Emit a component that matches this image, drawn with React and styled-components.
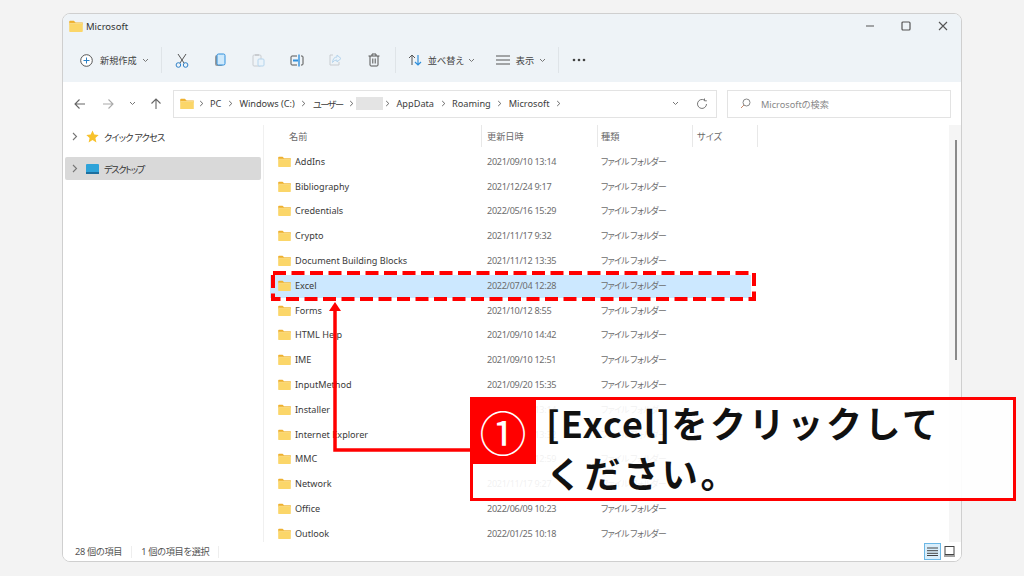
import styled, { createGlobalStyle } from "styled-components";

const UI_FONT = `"Noto Sans", "Noto Sans CJK JP", sans-serif`;
const TEXT_SIZE = "9.2px";

const GlobalStyle = createGlobalStyle`
    html, body {
        margin: 0;
        padding: 0;
        background: #f3f3f3;
    }
    * {
        box-sizing: border-box;
    }
`;

const Page = styled.div`
    position: relative;
    width: 1024px;
    height: 576px;
    padding: 13px 62px 14px 62px;
    overflow: hidden;
    font-family: ${UI_FONT};
    font-feature-settings: "palt";
    color: #3c3c3c;
`;

const Win = styled.div`
    height: 100%;
    display: flex;
    flex-direction: column;
    background: #fff;
    border: 1px solid #cfcfcf;
    border-radius: 8px;
    overflow: hidden;
`;

const Head = styled.div`
    height: 68px;
    flex: none;
    background: #eef3f7;
    display: flex;
    flex-direction: column;
`;

const TitleBar = styled.div`
    height: 24px;
    display: flex;
    align-items: center;
    padding-left: 6px;
    font-size: 9.5px;
    color: #333;
    gap: 3px;
`;

const WinControls = styled.div`
    margin-left: auto;
    display: flex;
`;

const WinBtn = styled.div`
    width: 36.5px;
    height: 24px;
    display: flex;
    align-items: center;
    justify-content: center;
`;

const Toolbar = styled.div`
    height: 44px;
    display: flex;
    align-items: center;
    padding-left: 17px;
`;

const ToolText = styled.span`
    font-size: ${TEXT_SIZE};
    color: #444;
    white-space: nowrap;
    margin: ${(p) => p.$margin || "0"};
`;

const ToolIcon = styled.div`
    width: ${(p) => p.$w || 38.4}px;
    height: 20px;
    display: flex;
    align-items: center;
    justify-content: center;
    flex: none;
    margin: ${(p) => p.$margin || "0"};
`;

const ToolSep = styled.div`
    width: 1px;
    height: 26px;
    background: #dfe4e8;
    flex: none;
    margin: ${(p) => p.$margin || "0"};
`;

const Chevron = styled.svg`
    width: 7px;
    height: 5px;
    flex: none;
    margin: ${(p) => p.$margin || "0"};
`;

const AddressRow = styled.div`
    height: 43px;
    flex: none;
    display: flex;
    align-items: center;
    padding: 0 10px 0 6px;
`;

const NavIcons = styled.div`
    width: 104px;
    flex: none;
    display: flex;
    align-items: center;
`;

const NavBtn = styled.div`
    width: ${(p) => p.$w}px;
    display: flex;
    justify-content: center;
`;

const AddressBox = styled.div`
    width: 544px;
    height: 28px;
    flex: none;
    background: #fff;
    border: 1px solid #e3e3e3;
    display: flex;
    align-items: center;
    padding: 0 8px 0 6px;
    font-size: ${TEXT_SIZE};
    color: #3c3c3c;
`;

const Crumb = styled.span`
    white-space: nowrap;
    letter-spacing: ${(p) => p.$spacing || 0}px;
`;

const CrumbSep = styled.span`
    width: 18px;
    flex: none;
    display: flex;
    justify-content: center;
    margin: ${(p) => p.$margin || "0"};
`;

const Blurred = styled.span`
    width: 27px;
    height: 13px;
    background: #e4e4e4;
    margin: 0 -4px 0 -5px;
    flex: none;
`;

const AddressTools = styled.div`
    margin-left: auto;
    display: flex;
    align-items: center;
    gap: 17px;
`;

const SearchBox = styled.div`
    width: 224px;
    height: 28px;
    margin-left: 10px;
    flex: none;
    background: #fff;
    border: 1px solid #e3e3e3;
    display: flex;
    align-items: center;
    gap: 10px;
    padding-left: 12px;
    font-size: ${TEXT_SIZE};
    color: #888;
`;

const Body = styled.div`
    flex: 1;
    min-height: 0;
    display: flex;
`;

const Sidebar = styled.div`
    width: 201px;
    flex: none;
    border-right: 1px solid #f0f0f0;
    padding: 0 2px;
`;

const NavItem = styled.div`
    height: 23px;
    margin-top: ${(p) => p.$top}px;
    display: flex;
    align-items: center;
    padding-left: 6px;
    gap: 8px;
    font-size: ${TEXT_SIZE};
    color: #333;
    border-radius: 2px;
    background: ${(p) => (p.$active ? "#d9d9d9" : "transparent")};
`;

const NavLabel = styled.span`
    margin-left: -3px;
    letter-spacing: ${(p) => p.$spacing}px;
`;

const Main = styled.div`
    flex: 1;
    min-width: 0;
    display: flex;
    flex-direction: column;
    padding-left: 6px;
`;

const ColHeader = styled.div`
    height: 22px;
    flex: none;
    display: grid;
    grid-template-columns: 212px 116px 95px 65px;
    font-size: ${TEXT_SIZE};
    color: #6a6a6a;
`;

const ColCell = styled.div`
    display: flex;
    align-items: center;
    padding-left: ${(p) => p.$pad || 5}px;
    border-right: 1px solid #e8e8e8;
`;

const List = styled.div`
    flex: 1;
    min-height: 0;
    overflow: hidden;
    padding-top: 2px;
`;

const Row = styled.div`
    height: 24.8px;
    display: grid;
    grid-template-columns: 212px 116px 95px;
    align-items: center;
    font-size: 9.1px;
    width: 481px;
    color: #3a3a3a;
    background: ${(p) => (p.$selected ? "#cce8ff" : "transparent")};
    box-shadow: ${(p) => (p.$selected ? "inset 0 2px 0 #fff" : "none")};
`;

const NameCell = styled.div`
    display: flex;
    align-items: center;
    gap: 4px;
    padding-left: 8px;
    white-space: nowrap;
`;

const DateCell = styled.div`
    padding-left: 5px;
    color: #6d6d6d;
    white-space: nowrap;
    letter-spacing: -0.3px;
`;

const TypeCell = styled.div`
    padding-left: 3px;
    color: #6d6d6d;
    font-size: 8.8px;
    white-space: nowrap;
    letter-spacing: -0.7px;
`;

const ScrollTrack = styled.div`
    width: 12px;
    flex: none;
    background: #f5f5f5;
    padding: 15px 0 0 6px;
`;

const ScrollThumb = styled.div`
    width: 2px;
    height: 220px;
    background: #8a8a8a;
`;

const StatusBar = styled.div`
    height: 19px;
    flex: none;
    display: flex;
    align-items: center;
    padding-left: 12px;
    font-size: ${TEXT_SIZE};
    letter-spacing: -0.3px;
    color: #555;
    background: #fff;
`;

const StatusItem = styled.span`
    padding-right: 9px;
    margin-right: 9px;
    border-right: 1px solid #eee;
    line-height: 12px;
`;

const ViewSwitch = styled.div`
    margin-left: auto;
    display: flex;
    align-items: center;
    padding-right: 3px;
`;

const ViewBtn = styled.div`
    width: 17px;
    height: 17px;
    display: flex;
    align-items: center;
    justify-content: center;
    border: 1px solid ${(p) => (p.$on ? "#6cb8e6" : "transparent")};
    background: ${(p) => (p.$on ? "#d9eefb" : "transparent")};
`;

/* annotations drawn on top of the screenshot */
const DashedBox = styled.svg`
    position: absolute;
    left: 271px;
    top: 271px;
    width: 485px;
    height: 30px;
`;

const Arrow = styled.svg`
    position: absolute;
    left: 320px;
    top: 296px;
    width: 160px;
    height: 160px;
`;

const Callout = styled.div`
    position: absolute;
    left: 470px;
    top: 397px;
    width: 546px;
    height: 104px;
    border: 3px solid #f00;
    background: rgba(255, 255, 255, 0.9);
    display: flex;
    font-family: "Noto Sans CJK JP", sans-serif;
    font-feature-settings: normal;
`;

const Badge = styled.div`
    width: 66px;
    height: 67px;
    margin: -3px 0 0 -3px;
    flex: none;
    background: #f00;
    color: #fff;
    display: flex;
    align-items: center;
    justify-content: center;
    font-size: 47px;
    line-height: 1;
`;

const CalloutText = styled.div`
    font-size: 36px;
    line-height: 50px;
    font-weight: 700;
    color: #111;
    width: 430px;
    margin-top: -3px;
    padding-left: 10px;
    letter-spacing: 2.6px;
`;

const CalloutLatin = styled.span`
    letter-spacing: 1.2px;
`;

const FolderIcon = ({ size = 13 }) => (
    <svg width={size} height={size * 0.85} viewBox="0 0 16 14" style={{ flex: "none" }}>
        <path d="M0 2 Q0 1 1 1 H5.5 L7.5 3 H16 V5 H0 Z" fill="#eeb02f" />
        <path d="M0 4 H15 Q16 4 16 5 V13 Q16 14 15 14 H1 Q0 14 0 13 Z" fill="#fbd669" />
        <path d="M0 4 H16" stroke="#fde9a6" strokeWidth="0.8" />
    </svg>
);

const ChevronDown = ({ margin, color = "#777" }) => (
    <Chevron viewBox="0 0 7 5" $margin={margin}>
        <path d="M1 1 L3.5 3.5 L6 1" fill="none" stroke={color} strokeWidth="1" />
    </Chevron>
);

const ChevronRight = ({ color = "#777" }) => (
    <svg width="7" height="9" viewBox="0 0 7 9">
        <path d="M2 1 L5.5 4.5 L2 8" fill="none" stroke={color} strokeWidth="1.1" />
    </svg>
);

const BreadcrumbSep = ({ margin }) => (
    <CrumbSep $margin={margin}>
        <svg width="5" height="7" viewBox="0 0 5 7">
            <path d="M1.2 1 L3.8 3.5 L1.2 6" fill="none" stroke="#666" strokeWidth="1" />
        </svg>
    </CrumbSep>
);

const ArrowIcon = ({ d, color = "#666" }) => (
    <svg width="12" height="12" viewBox="0 0 12 12">
        <path d={d} fill="none" stroke={color} strokeWidth="1.1" />
    </svg>
);

const rows = [
    ["AddIns", "2021/09/10 13:14"],
    ["Bibliography", "2021/12/24 9:17"],
    ["Credentials", "2022/05/16 15:29"],
    ["Crypto", "2021/11/17 9:32"],
    ["Document Building Blocks", "2021/11/12 13:35"],
    ["Excel", "2022/07/04 12:28", true],
    ["Forms", "2021/10/12 8:55"],
    ["HTML Help", "2021/09/10 14:42"],
    ["IME", "2021/09/10 12:51"],
    ["InputMethod", "2021/09/20 15:35"],
    ["Installer", "2021/09/10 13:14"],
    ["Internet Explorer", "2021/09/10 13:32"],
    ["MMC", "2021/09/10 12:59"],
    ["Network", "2021/11/17 9:27"],
    ["Office", "2022/06/09 10:23"],
    ["Outlook", "2022/01/25 10:18"],
];

function App() {
    return (
        <Page>
            <GlobalStyle />
            <Win>
                <Head>
                    <TitleBar>
                        <FolderIcon size={14} />
                        <span>Microsoft</span>
                        <WinControls>
                            <WinBtn>
                                <svg width="10" height="10" viewBox="0 0 10 10">
                                    <path d="M1 5 H9" stroke="#555" strokeWidth="1.2" />
                                </svg>
                            </WinBtn>
                            <WinBtn>
                                <svg width="10" height="10" viewBox="0 0 10 10">
                                    <rect x="1" y="1" width="8" height="8" rx="1" fill="none" stroke="#555" strokeWidth="1.2" />
                                </svg>
                            </WinBtn>
                            <WinBtn>
                                <svg width="10" height="10" viewBox="0 0 10 10">
                                    <path d="M1 1 L9 9 M9 1 L1 9" stroke="#555" strokeWidth="1.1" />
                                </svg>
                            </WinBtn>
                        </WinControls>
                    </TitleBar>
                    <Toolbar>
                        <svg width="13" height="13" viewBox="0 0 13 13">
                            <circle cx="6.5" cy="6.5" r="5.8" fill="#fff" stroke="#555" />
                            <path d="M6.5 3.5 V9.5 M3.5 6.5 H9.5" stroke="#2a7fc4" />
                        </svg>
                        <ToolText $margin="0 0 0 7px">新規作成</ToolText>
                        <ChevronDown margin="0 0 0 5px" />
                        <ToolSep $margin="0 1px 0 12px" />
                        <ToolIcon $w={38}>
                            <svg width="14" height="15" viewBox="0 0 14 15">
                                <path d="M3 1 L9 10 M11 1 L5 10" stroke="#555" fill="none" />
                                <circle cx="3.4" cy="12" r="2.3" fill="none" stroke="#2f80c8" />
                                <circle cx="10.6" cy="12" r="2.3" fill="none" stroke="#2f80c8" />
                            </svg>
                        </ToolIcon>
                        <ToolIcon>
                            <svg width="12" height="14" viewBox="0 0 12 14">
                                <rect x="1" y="2" width="8" height="11" rx="2" fill="#999" />
                                <rect x="3" y="1" width="8" height="11" rx="1.5" fill="#cfe9fb" stroke="#2f8fdc" />
                            </svg>
                        </ToolIcon>
                        <ToolIcon>
                            <svg width="13" height="14" viewBox="0 0 13 14">
                                <rect x="1" y="2" width="8" height="11" rx="1" fill="none" stroke="#c9ccd0" />
                                <rect x="3" y="1" width="4" height="2" fill="#c9ccd0" />
                                <rect x="6" y="6" width="6" height="7" rx="1" fill="#eaf3fa" stroke="#b5d4ec" />
                            </svg>
                        </ToolIcon>
                        <ToolIcon>
                            <svg width="14" height="13" viewBox="0 0 14 13">
                                <path d="M7 2 H2 Q1 2 1 3 V10 Q1 11 2 11 H7 M11 2 H12 Q13 2 13 3 V10 Q13 11 12 11 H11" fill="none" stroke="#555" />
                                <path d="M9 0.5 V12.5" stroke="#2f8fdc" strokeWidth="1.4" />
                                <path d="M3 6.5 H8" stroke="#2f8fdc" strokeWidth="2" />
                            </svg>
                        </ToolIcon>
                        <ToolIcon>
                            <svg width="13" height="12" viewBox="0 0 13 12">
                                <path d="M4 1 H1 V11 H10 V8" fill="none" stroke="#c9ccd0" />
                                <path d="M8 1 L12 4.5 L8 8 V6 Q5 6 3.5 8.5 Q4 3 8 3 Z" fill="#eaf3fa" stroke="#b5d4ec" />
                            </svg>
                        </ToolIcon>
                        <ToolIcon>
                            <svg width="12" height="14" viewBox="0 0 12 14">
                                <path d="M0.5 3 H11.5 M4 3 V1 H8 V3 M2 3 V12 Q2 13 3 13 H9 Q10 13 10 12 V3 M4.8 5.5 V10.5 M7.2 5.5 V10.5" fill="none" stroke="#555" />
                            </svg>
                        </ToolIcon>
                        <ToolSep $margin="0 6px 0 2px" />
                        <ToolIcon $w={26}>
                            <svg width="14" height="12" viewBox="0 0 14 12">
                                <path d="M4 11 V1 M1 4 L4 1 L7 4" fill="none" stroke="#555" />
                                <path d="M10 1 V11 M7 8 L10 11 L13 8" fill="none" stroke="#2f8fdc" strokeWidth="1.2" />
                            </svg>
                        </ToolIcon>
                        <ToolText>並べ替え</ToolText>
                        <ChevronDown margin="0 0 0 4px" />
                        <ToolIcon $w={26} $margin="0 0 0 15px">
                            <svg width="14" height="10" viewBox="0 0 14 10">
                                <path d="M0 1 H14 M0 5 H14 M0 9 H14" stroke="#555" />
                            </svg>
                        </ToolIcon>
                        <ToolText>表示</ToolText>
                        <ChevronDown margin="0 0 0 5px" />
                        <ToolSep $margin="0 0 0 12px" />
                        <ToolIcon $w={39}>
                            <svg width="14" height="4" viewBox="0 0 14 4">
                                <circle cx="2" cy="2" r="1.3" fill="#444" />
                                <circle cx="7" cy="2" r="1.3" fill="#444" />
                                <circle cx="12" cy="2" r="1.3" fill="#444" />
                            </svg>
                        </ToolIcon>
                    </Toolbar>
                </Head>
                <AddressRow>
                    <NavIcons>
                        <NavBtn $w={22}>
                            <ArrowIcon d="M11 6 H1 M5.5 1.5 L1 6 L5.5 10.5" />
                        </NavBtn>
                        <NavBtn $w={34}>
                            <ArrowIcon d="M1 6 H11 M6.5 1.5 L11 6 L6.5 10.5" color="#aaa" />
                        </NavBtn>
                        <NavBtn $w={14}>
                            <ChevronDown />
                        </NavBtn>
                        <NavBtn $w={34}>
                            <ArrowIcon d="M6 11 V1 M1.5 5.5 L6 1 L10.5 5.5" />
                        </NavBtn>
                    </NavIcons>
                    <AddressBox>
                        <FolderIcon size={14} />
                        <BreadcrumbSep margin="0 0 0 -2px" />
                        <Crumb>PC</Crumb>
                        <BreadcrumbSep />
                        <Crumb>Windows (C:)</Crumb>
                        <BreadcrumbSep />
                        <Crumb $spacing={-1.5}>ユーザー</Crumb>
                        <BreadcrumbSep />
                        <Blurred />
                        <BreadcrumbSep />
                        <Crumb>AppData</Crumb>
                        <BreadcrumbSep />
                        <Crumb>Roaming</Crumb>
                        <BreadcrumbSep />
                        <Crumb>Microsoft</Crumb>
                        <BreadcrumbSep />
                        <AddressTools>
                            <ChevronDown />
                            <svg width="12" height="12" viewBox="0 0 12 12">
                                <path d="M10.5 6 A4.5 4.5 0 1 1 8.5 2.2 M8.5 0.5 V2.8 H10.8" fill="none" stroke="#777" />
                            </svg>
                        </AddressTools>
                    </AddressBox>
                    <SearchBox>
                        <svg width="11" height="11" viewBox="0 0 11 11">
                            <circle cx="6.5" cy="4.5" r="3.5" fill="none" stroke="#888" />
                            <path d="M4 7 L1 10" stroke="#c98a6a" />
                        </svg>
                        <span>Microsoftの検索</span>
                    </SearchBox>
                </AddressRow>
                <Body>
                    <Sidebar>
                        <NavItem $top={0}>
                            <ChevronRight />
                            <svg width="13" height="13" viewBox="0 0 13 13">
                                <path d="M6.5 0.5 L8.3 4.6 L12.7 5 L9.4 8 L10.4 12.4 L6.5 10 L2.6 12.4 L3.6 8 L0.3 5 L4.7 4.6 Z" fill="#f8c22c" />
                            </svg>
                            <NavLabel $spacing={-0.8}>クイック アクセス</NavLabel>
                        </NavItem>
                        <NavItem $top={9} $active>
                            <ChevronRight />
                            <svg width="13" height="10" viewBox="0 0 13 10">
                                <rect width="13" height="9" rx="1" fill="#2ea3d9" />
                                <rect y="8" width="13" height="2" fill="#1d6f9f" />
                            </svg>
                            <NavLabel $spacing={-1.3}>デスクトップ</NavLabel>
                        </NavItem>
                    </Sidebar>
                    <Main>
                        <ColHeader>
                            <ColCell $pad={19}>名前</ColCell>
                            <ColCell>更新日時</ColCell>
                            <ColCell $pad={3}>種類</ColCell>
                            <ColCell $pad={4}>サイズ</ColCell>
                        </ColHeader>
                        <List>
                            {rows.map(([name, date, selected]) => (
                                <Row key={name} $selected={selected}>
                                    <NameCell>
                                        <FolderIcon size={13} />
                                        {name}
                                    </NameCell>
                                    <DateCell>{date}</DateCell>
                                    <TypeCell>ファイル フォルダー</TypeCell>
                                </Row>
                            ))}
                        </List>
                    </Main>
                    <ScrollTrack>
                        <ScrollThumb />
                    </ScrollTrack>
                </Body>
                <StatusBar>
                    <StatusItem>28 個の項目</StatusItem>
                    <StatusItem>1 個の項目を選択</StatusItem>
                    <ViewSwitch>
                        <ViewBtn $on>
                            <svg width="11" height="9" viewBox="0 0 11 9">
                                <path d="M0 1 H11 M0 3.7 H11 M0 6.3 H11 M0 8.5 H11" stroke="#444" />
                            </svg>
                        </ViewBtn>
                        <ViewBtn>
                            <svg width="11" height="11" viewBox="0 0 11 11">
                                <rect x="1" y="0.5" width="9" height="8" fill="none" stroke="#444" />
                                <path d="M0 10 H11" stroke="#444" />
                            </svg>
                        </ViewBtn>
                    </ViewSwitch>
                </StatusBar>
            </Win>

            <DashedBox viewBox="0 0 485 30">
                <rect x="2" y="2" width="481" height="26" fill="none" stroke="#f00" strokeWidth="4" strokeDasharray="13 5.5" />
            </DashedBox>
            <Arrow viewBox="0 0 160 160">
                <path d="M15 12 V154 H150" fill="none" stroke="#f00" strokeWidth="3.5" />
                <path d="M15 6 L21 15 H9 Z" fill="#f00" />
            </Arrow>
            <Callout>
                <Badge>①</Badge>
                <CalloutText>
                    <CalloutLatin>[Excel]</CalloutLatin>をクリックしてください。
                </CalloutText>
            </Callout>
        </Page>
    );
}

export default App;
